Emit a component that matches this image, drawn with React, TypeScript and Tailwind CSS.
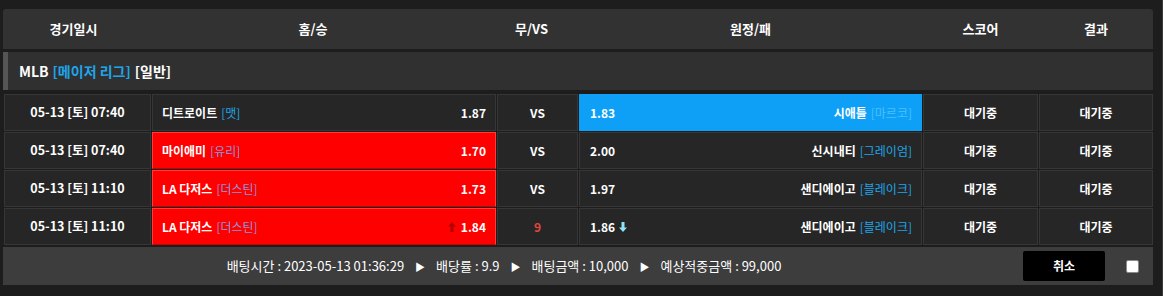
import React from 'react';

type Row = {
  date: string;
  home: string;
  homeTag: string;
  homeOdds: string;
  draw: string;
  away: string;
  awayTag: string;
  awayOdds: string;
  pick: 'home' | 'away';
  homeUp?: boolean;
  awayDown?: boolean;
};

const rows: Row[] = [
  { date: '05-13 [토] 07:40', home: '디트로이트', homeTag: '[맷]', homeOdds: '1.87', draw: 'VS', away: '시애틀', awayTag: '[마르코]', awayOdds: '1.83', pick: 'away' },
  { date: '05-13 [토] 07:40', home: '마이애미', homeTag: '[유리]', homeOdds: '1.70', draw: 'VS', away: '신시내티', awayTag: '[그레이엄]', awayOdds: '2.00', pick: 'home' },
  { date: '05-13 [토] 11:10', home: 'LA 다저스', homeTag: '[더스틴]', homeOdds: '1.73', draw: 'VS', away: '샌디에이고', awayTag: '[블레이크]', awayOdds: '1.97', pick: 'home' },
  { date: '05-13 [토] 11:10', home: 'LA 다저스', homeTag: '[더스틴]', homeOdds: '1.84', draw: '9', away: '샌디에이고', awayTag: '[블레이크]', awayOdds: '1.86', pick: 'home', homeUp: true, awayDown: true },
];

const cols = 'grid grid-cols-[147px_344px_81px_343px_115px_114px] gap-x-px';
const cell = 'h-[37px] flex items-center border border-[#363636] bg-[#262626]';

const UpArrow = () => (
  <svg width="8" height="10" viewBox="0 0 8 10" className="mr-[5px]">
    <path d="M4 0 L8 4.5 H5.5 V10 H2.5 V4.5 H0 Z" fill="#b30000" />
  </svg>
);

const DownArrow = () => (
  <svg width="8" height="10" viewBox="0 0 8 10" className="ml-[4px]">
    <path d="M4 10 L8 5.5 H5.5 V0 H2.5 V5.5 H0 Z" fill="#8fe3f7" />
  </svg>
);

export default function App() {
  return (
    <div
      className="w-[1163px] h-[296px] bg-[#1d1d1d] text-white border-r border-[#3a3a3a] pt-[9px]"
      style={{ fontFamily: '"Noto Sans CJK KR", "Noto Sans", sans-serif' }}
    >
      <div className="w-[1150px] ml-[3px] flex flex-col">
        {/* header */}
        <div className={`${cols} h-[40px] bg-[#323232] rounded-t-[3px] items-center text-[13px] font-bold pl-px`}>
          <div className="text-center pr-[8px]">경기일시</div>
          <div className="text-center pr-[22px]">홈/승</div>
          <div className="text-center pr-[12px]">무/VS</div>
          <div className="text-center">원정/패</div>
          <div className="text-center">스코어</div>
          <div className="text-center">결과</div>
        </div>

        {/* league */}
        <div className="mt-[3px] h-[38px] bg-[#303030] flex items-center text-[14px] font-bold">
          <div className="w-[5px] h-full bg-[#555555]" />
          <span className="ml-[11px]">MLB</span>
          <span className="ml-[4px] text-[#1ea6ea]">[메이저 리그]</span>
          <span className="ml-[4px]">[일반]</span>
        </div>

        {/* rows */}
        <div className="mt-[4px] flex flex-col gap-y-px pl-px text-[12px] font-bold">
          {rows.map((r, i) => {
            const homeSel = r.pick === 'home';
            const awaySel = r.pick === 'away';
            return (
              <div key={i} className={cols}>
                <div className={`${cell} justify-center text-[12.5px]`}>{r.date}</div>
                <div
                  className={`h-[37px] flex items-center px-[9px] border ${
                    homeSel ? 'bg-[#ff0000] border-[#ff3b3b] border-b-[#c80000]' : 'bg-[#262626] border-[#363636]'
                  }`}
                >
                  <span>{r.home}</span>
                  <span className={`ml-[4px] font-normal ${homeSel ? 'text-[#8c95dc]' : 'text-[#1ea6ea]'}`}>{r.homeTag}</span>
                  <span className="ml-auto flex items-center">
                    {r.homeUp && <UpArrow />}
                    {r.homeOdds}
                  </span>
                </div>
                <div className={`${cell} justify-center ${r.draw === 'VS' ? '' : 'text-[#e0473d]'}`}>{r.draw}</div>
                <div
                  className={`h-[37px] flex items-center pl-[10px] pr-[9px] border ${
                    awaySel ? 'bg-[#0ea0f6] border-[#0ea0f6]' : 'bg-[#262626] border-[#363636]'
                  }`}
                >
                  <span className="flex items-center">
                    {r.awayOdds}
                    {r.awayDown && <DownArrow />}
                  </span>
                  <span className="ml-auto">{r.away}</span>
                  <span className={`ml-[4px] font-normal ${awaySel ? 'text-[#47c0ff]' : 'text-[#1ea6ea]'}`}>{r.awayTag}</span>
                </div>
                <div className={`${cell} justify-center`}>대기중</div>
                <div className={`${cell} justify-center`}>대기중</div>
              </div>
            );
          })}
        </div>

        {/* footer */}
        <div className="mt-[2px] h-[38px] bg-[#3d3d3d] flex items-center text-[13px]">
          <div className="flex-1 flex items-center justify-center gap-[11px] pl-[22px]">
            <span>배팅시간 : 2023-05-13 01:36:29</span>
            <span className="text-[10px]">▶</span>
            <span>배당률 : 9.9</span>
            <span className="text-[10px]">▶</span>
            <span>배팅금액 : 10,000</span>
            <span className="text-[10px]">▶</span>
            <span>예상적중금액 : 99,000</span>
          </div>
          <button className="ml-[40px] w-[82px] h-[30px] bg-black rounded-[2px] text-[12px] font-bold text-white">취소</button>
          <div className="ml-[21px] mr-[14px] w-[13px] h-[13px] bg-white border border-[#8a8a8a] rounded-[2px]" />
        </div>
      </div>
    </div>
  );
}
